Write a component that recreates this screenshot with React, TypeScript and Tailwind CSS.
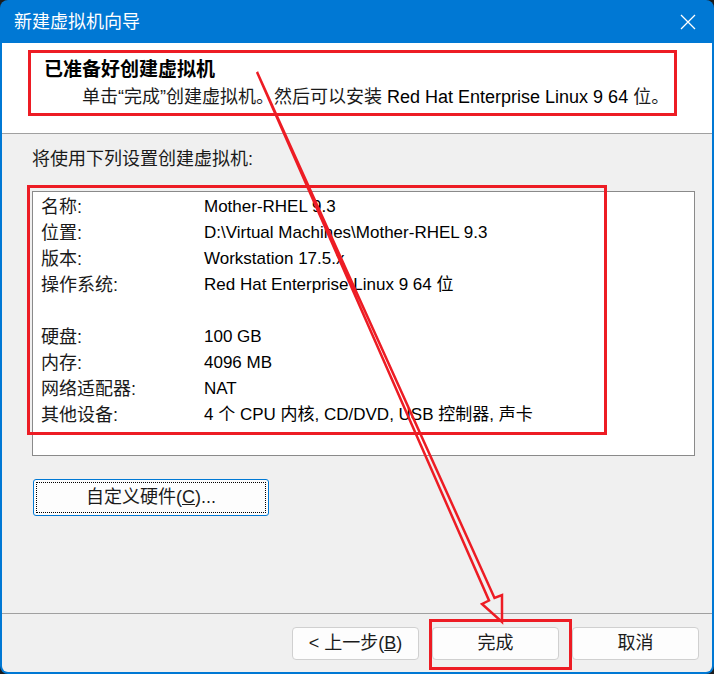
import React from "react";

const FONT = '"Liberation Sans", "Noto Sans CJK SC", sans-serif';

const rows: [string, string][] = [
  ["名称:", "Mother-RHEL 9.3"],
  ["位置:", "D:\\Virtual Machines\\Mother-RHEL 9.3"],
  ["版本:", "Workstation 17.5.x"],
  ["操作系统:", "Red Hat Enterprise Linux 9 64 位"],
  ["", ""],
  ["硬盘:", "100 GB"],
  ["内存:", "4096 MB"],
  ["网络适配器:", "NAT"],
  ["其他设备:", "4 个 CPU 内核, CD/DVD, USB 控制器, 声卡"],
];

function FooterButton({ children }: { children: React.ReactNode }) {
  return (
    <div className="w-[127px] h-[33px] flex items-center justify-center rounded-[4px] border border-[#d0d0d0] bg-[#fdfdfd] text-[18px] text-[#1b1b1b]">
      {children}
    </div>
  );
}

export default function App() {
  return (
    <div className="relative w-[714px] h-[674px] bg-[#1c1c1c]" style={{ fontFamily: FONT }}>
      <div className="w-full h-full rounded-[8px] overflow-hidden bg-[#0078d4] flex flex-col px-[2px] pb-[2px]">
        {/* Title bar */}
        <div className="h-[43px] shrink-0 flex items-center justify-between -mx-[2px] pl-[14px] pr-[18px]">
          <span className="text-white text-[18px] leading-none">新建虚拟机向导</span>
          <svg width="16" height="16" viewBox="0 0 16 16">
            <path d="M1 1 L15 15 M15 1 L1 15" stroke="white" strokeWidth="1.3" fill="none" />
          </svg>
        </div>

        {/* Content */}
        <div className="flex-1 flex flex-col bg-[#f0f0f0] rounded-b-[6px] overflow-hidden">
          {/* Header */}
          <div className="h-[91px] shrink-0 bg-white border-b border-[#a0a0a0] pt-[7px] pl-[26px]">
            <div className="w-[649px] h-[66px] border-[3px] border-[#ed1c24]">
              <div className="pt-[5px] pl-[13px] h-[29px] leading-[24px] text-[19px] font-bold text-black">
                已准备好创建虚拟机
              </div>
              <div className="mt-[3px] pl-[51px] leading-[24px] text-[18px] text-[#1a1a1a] whitespace-nowrap">
                单击“完成”创建虚拟机。然后可以安装 <span className="text-black">Red Hat Enterprise Linux 9 64</span> 位。
              </div>
            </div>
          </div>

          {/* Body */}
          <div className="flex-1 flex flex-col pl-[30px]">
            <div className="pt-[13px] leading-[24px] text-[18px] text-[#1a1a1a]">将使用下列设置创建虚拟机:</div>
            <div className="relative mt-[20px] w-[663px] h-[265px] bg-white border border-[#8a8a8a]">
              <div className="pt-[2px] pl-[8px] flex flex-col">
                {rows.map(([l, v], i) => (
                  <div key={i} className="h-[26px] flex items-center text-black">
                    <span className="w-[163px] shrink-0 text-[18px] text-[#1a1a1a]">{l}</span>
                    <span className="text-[17px] whitespace-nowrap">{v}</span>
                  </div>
                ))}
              </div>
              <div className="absolute left-[-6px] top-[-7px] w-[580px] h-[250px] border-[3px] border-[#ed1c24] pointer-events-none" />
            </div>
            <div className="mt-[23px] ml-[1px] w-[236px] h-[37px] rounded-[3px] border border-[#0078d4] bg-[#fdfdfd] p-[2px]">
              <div className="w-full h-full border border-dotted border-black flex items-center justify-center text-[18px] text-[#1b1b1b]">
                自定义硬件(<span className="underline">C</span>)...
              </div>
            </div>
          </div>

          {/* Footer */}
          <div className="h-[59px] shrink-0 border-t border-[#a0a0a0] flex justify-end items-start pt-[13px] pr-[13px] gap-[13px]">
            <FooterButton>
              &lt; 上一步(<span className="underline">B</span>)
            </FooterButton>
            <div className="relative">
              <FooterButton>完成</FooterButton>
              <div className="absolute left-[-3px] top-[-8px] w-[143px] h-[51px] border-[3px] border-[#ed1c24] pointer-events-none" />
            </div>
            <FooterButton>取消</FooterButton>
          </div>
        </div>
      </div>

      {/* Annotation arrow */}
      <svg className="absolute inset-0 pointer-events-none" width="714" height="674" viewBox="0 0 714 674">
        <path
          d="M257 72 L494.5 598 L502 595 L502 622 L482 604 L489 600.5 Z"
          fill="none"
          stroke="#ed1c24"
          strokeWidth="2.5"
          strokeLinejoin="miter"
        />
      </svg>
    </div>
  );
}
